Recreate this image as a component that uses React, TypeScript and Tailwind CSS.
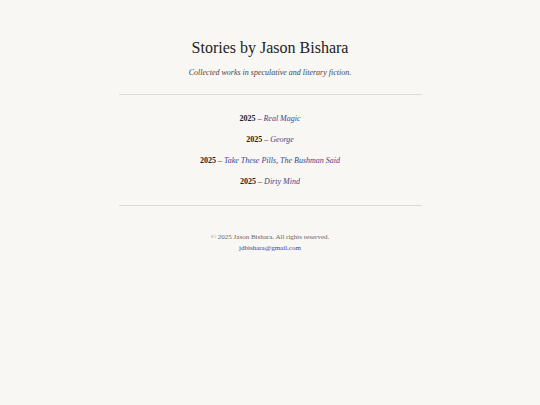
export default function App() {
  const stories = [
    "Real Magic",
    "George",
    "Take These Pills, The Bushman Said",
    "Dirty Mind",
  ];

  return (
    <div className="min-h-screen bg-[#f8f7f4] text-[#222] font-['Liberation_Serif',serif]">
      <div className="mx-auto w-[303px] pt-[38px] text-center">
        <h1 className="text-[16px] leading-[20px] font-normal text-[#222]">Stories by Jason Bishara</h1>
        <p className="mt-[9px] text-[8px] italic text-[#444]">Collected works in speculative and literary fiction.</p>

        <hr className="mt-[15px] border-t border-[#dddbd6]" />

        <ul className="pt-[18px] pb-[17px] text-[8px] leading-[12px] space-y-[9px]">
          {stories.map((s) => (
            <li key={s}>
              <span className="font-bold">2025</span> –{" "}
              <a href="#" className="italic text-[#3e4391]">{s}</a>
            </li>
          ))}
        </ul>

        <hr className="border-t border-[#dddbd6]" />

        <footer className="mt-[26px] text-[7px] leading-[11px] text-[#666]">
          <p>© 2025 Jason Bishara. All rights reserved.</p>
          <a href="#" className="text-[#3e4391]">jdbishara@gmail.com</a>
        </footer>
      </div>
    </div>
  );
}
